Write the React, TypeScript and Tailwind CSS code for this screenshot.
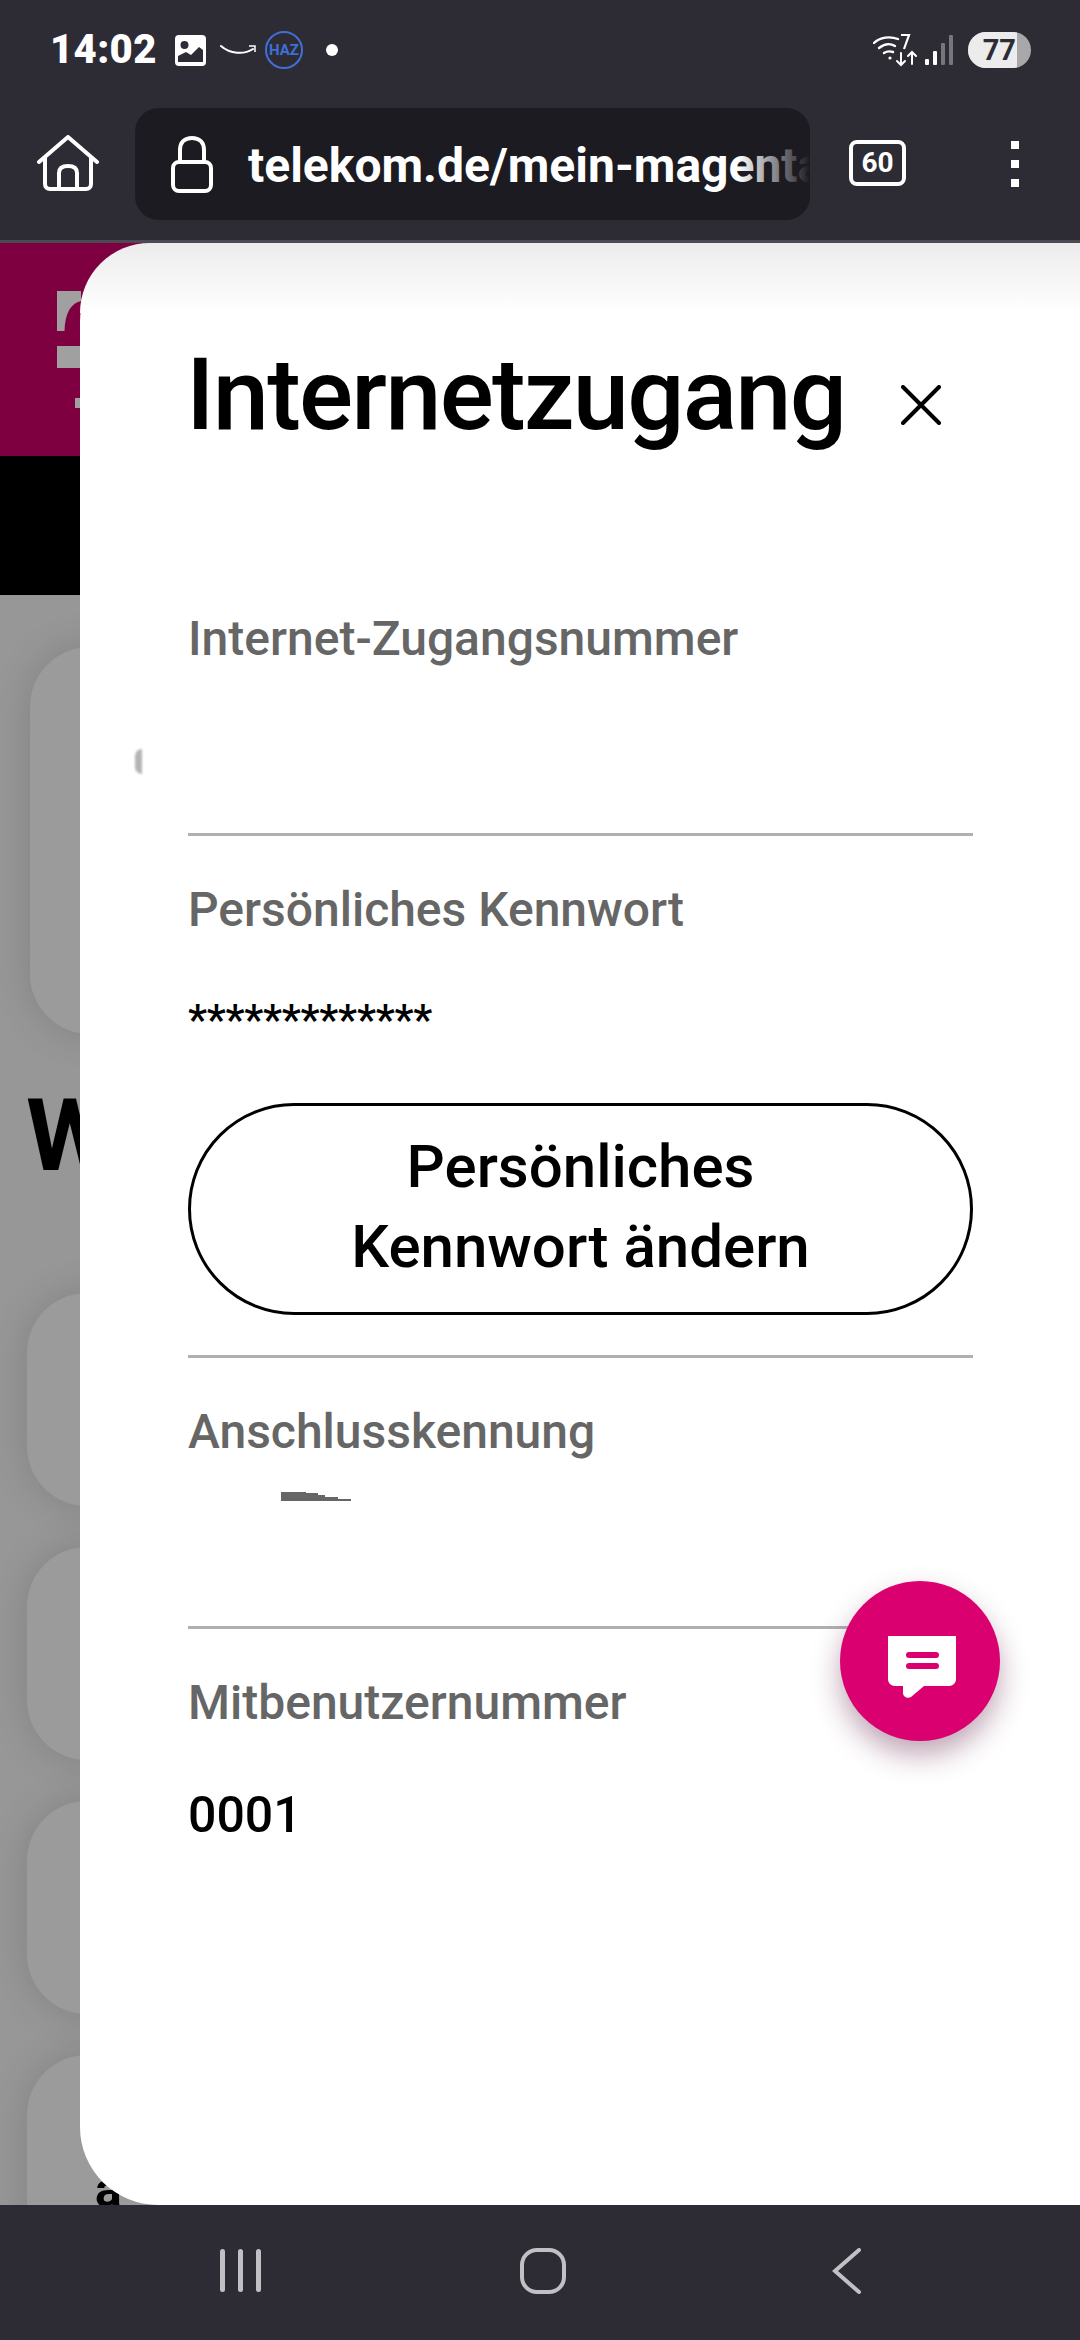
import React from "react";

const font = { fontFamily: "Roboto, 'Liberation Sans', sans-serif" };

function StatusBar() {
  return (
    <div className="flex h-[108px] items-center pl-[50px] pb-[8px]">
      <span className="w-[105px] whitespace-nowrap text-[40px] font-black leading-none tracking-[0.4px] text-white">14:02</span>
      <svg className="ml-[20px]" width="31" height="31" viewBox="0 0 31 31">
        <rect width="31" height="31" rx="4" fill="#fff" />
        <circle cx="9.5" cy="10" r="4" fill="#2d2c35" />
        <path d="M3 26V21L11 17L16 20L24 12L28 15V26Z" fill="#2d2c35" />
        <path d="M3 24V27H28V24Z" fill="#2d2c35" />
      </svg>
      <svg className="ml-[14px]" width="36" height="14" viewBox="0 0 36 14" fill="none">
        <path d="M1 3C10 11 24 12 33 6" stroke="#fff" strokeWidth="2" strokeLinecap="round" />
        <path d="M29 3H35V9" stroke="#fff" strokeWidth="1.5" />
      </svg>
      <div className="ml-[9px] flex h-[38px] w-[38px] items-center justify-center rounded-full border-2 border-[#3f6fd8] text-[15px] font-bold text-[#3f6fd8]">
        HAZ
      </div>
      <div className="ml-[23px] h-[12px] w-[12px] rounded-full bg-white" />
      <div className="ml-auto flex items-center pr-[49px]">
        <svg width="44" height="34" viewBox="0 0 44 34" fill="none" stroke="#fff" strokeLinecap="round">
          <path d="M1 10C7 4 17 3 25 6" strokeWidth="2.4" />
          <path d="M6 15C11 11 17 10 22 13" strokeWidth="2.4" />
          <path d="M11 20C14 18 17 18 20 19" strokeWidth="2.4" />
          <circle cx="17" cy="25" r="1.6" fill="#fff" stroke="none" />
          <path d="M28 2H36L31 16" strokeWidth="2.2" strokeLinecap="butt" />
          <path d="M28 20V32M24 28L28 32L32 28" strokeWidth="2" />
          <path d="M39 31V19M35 23L39 19L43 23" strokeWidth="2" />
        </svg>
        <svg className="ml-[8px]" width="28" height="30" viewBox="0 0 28 30">
          <rect x="0" y="24" width="4" height="6" rx="1" fill="#fff" />
          <rect x="8" y="16" width="4" height="14" rx="1" fill="#fff" />
          <rect x="16" y="8" width="4" height="22" rx="1" fill="#77767c" />
          <rect x="24" y="0" width="4" height="30" rx="1" fill="#77767c" />
        </svg>
        <div className="ml-[15px] flex h-[36px] w-[63px] overflow-hidden rounded-full bg-[#a8a8aa]">
          <div className="flex h-full w-[49px] items-center justify-end bg-[#ececec] pr-[1px] text-[29px] font-bold leading-none text-[#2d2c35]">
            77
          </div>
        </div>
      </div>
    </div>
  );
}

function BrowserBar() {
  return (
    <div className="flex h-[135px] items-start border-b-[3px] border-[#4b4a52]">
      <svg className="ml-[37px] mt-[27px]" width="62" height="56" viewBox="0 0 62 56" fill="none" stroke="#fff" strokeWidth="4" strokeLinejoin="round" strokeLinecap="round">
        <path d="M2 27L31 2L60 27" />
        <path d="M8 23V49C8 52 10 54 13 54H49C52 54 54 52 54 49V23" />
        <path d="M22 54V38C22 33 25 31 31 31C37 31 40 33 40 38V54" />
      </svg>
      <div className="relative ml-[36px] flex h-[112px] w-[675px] items-center overflow-hidden rounded-[24px] bg-[#1c1b21]">
        <svg className="ml-[36px] shrink-0" width="42" height="57" viewBox="0 0 42 57" fill="none" stroke="#fff" strokeWidth="4">
          <rect x="2" y="26" width="38" height="29" rx="6" />
          <path d="M9 26V14C9 6 14 2 21 2C28 2 33 6 33 14V26" />
        </svg>
        <span className="ml-[35px] mt-[4px] whitespace-nowrap text-[48px] font-bold leading-none text-white">
          telekom.de/mein-magenta
        </span>
        <div className="absolute inset-y-0 right-0 w-[72px] bg-gradient-to-r from-transparent to-[#1c1b21]" />
      </div>
      <div className="ml-[39px] mt-[32px] flex h-[46px] w-[57px] items-center justify-center rounded-[8px] border-[4px] border-white text-[28px] font-bold leading-none text-white">
        60
      </div>
      <div className="ml-[105px] mt-[33px] flex flex-col gap-[11px]">
        <div className="h-[8px] w-[8px] bg-white" />
        <div className="h-[8px] w-[8px] bg-white" />
        <div className="h-[8px] w-[8px] bg-white" />
      </div>
    </div>
  );
}

function PageBehind() {
  return (
    <div className="flex h-full flex-col overflow-hidden">
      <div className="h-[213px] shrink-0 bg-[#7f0040] pl-[57px] pt-[48px]">
        <svg width="24" height="117" viewBox="0 0 24 117" fill="#a0a0a0">
          <path d="M0 0H24V10C14 12 8 22 7.500 40H0Z" />
          <rect x="0" y="55" width="24" height="22" />
          <rect x="18" y="107" width="6" height="10" />
        </svg>
      </div>
      <div className="h-[139px] shrink-0 bg-black" />
      <div className="flex-1 bg-[#979797]">
        <div className="ml-[30px] mt-[52px] h-[387px] rounded-[60px] bg-[#9b9b9b] shadow-[0_0_40px_rgba(0,0,0,0.14)]" />
        <div className="ml-[26px] mt-[52px] h-[100px] text-[100px] font-bold leading-[100px] text-black">W</div>
        <div className="ml-[27px] mt-[107px] flex flex-col gap-[41px]">
          <div className="h-[213px] rounded-[60px] bg-[#9b9b9b] shadow-[0_0_40px_rgba(0,0,0,0.14)]" />
          <div className="h-[213px] rounded-[60px] bg-[#9b9b9b] shadow-[0_0_40px_rgba(0,0,0,0.14)]" />
          <div className="h-[213px] rounded-[60px] bg-[#9b9b9b] shadow-[0_0_40px_rgba(0,0,0,0.14)]" />
          <div className="h-[213px] rounded-[60px] bg-[#9b9b9b] pl-[68px] pt-[110px] text-[50px] font-bold leading-none text-black shadow-[0_0_40px_rgba(0,0,0,0.14)]">
            ä
          </div>
        </div>
      </div>
    </div>
  );
}

function Label({ children }: { children: React.ReactNode }) {
  return <div className="text-[48px] font-medium leading-[54px] text-[#666666]">{children}</div>;
}

function Sheet() {
  return (
    <div className="absolute inset-y-0 left-[80px] right-0 rounded-l-[78px] bg-white">
      <div className="absolute inset-x-0 top-0 h-[70px] rounded-tl-[78px] bg-gradient-to-b from-[#ececec] to-white" />
      <div className="relative pl-[108px] pr-[107px]">
        <div className="flex items-start pt-[92px]">
          <h1 className="-ml-[2px] text-[101px] font-medium leading-[120px] tracking-[-1.8px] text-black">Internetzugang</h1>
          <svg className="ml-[56px] mt-[50px]" width="40" height="40" viewBox="0 0 40 40" fill="none" stroke="#000" strokeWidth="4" strokeLinecap="round">
            <path d="M2 2L38 38M38 2L2 38" />
          </svg>
        </div>
        <div className="mt-[157px] h-[224px] border-b-[3px] border-[#b0b0b0]">
          <Label>Internet-Zugangsnummer</Label>
          <div className="-ml-[53px] mt-[83px] h-[25px] w-[7px] rounded-l-full bg-[#b5b5b5] blur-[1px]" />
        </div>
        <div className="h-[522px] border-b-[3px] border-[#b0b0b0] pt-[47px]">
          <Label>Persönliches Kennwort</Label>
          <div className="mt-[60px] text-[43px] font-medium leading-[44px] tracking-[-0.3px] text-black">*************</div>
          <div className="mt-[62px] flex h-[212px] w-full items-center justify-center rounded-full border-[3px] border-black pb-[5px] text-center text-[60px] font-medium leading-[80px] text-black">
            Persönliches
            <br />
            Kennwort ändern
          </div>
        </div>
        <div className="h-[271px] border-b-[3px] border-[#b0b0b0] pt-[47px]">
          <Label>Anschlusskennung</Label>
          <svg className="ml-[93px] mt-[33px] blur-[0.5px]" width="70" height="10" viewBox="0 0 70 10" fill="#666">
            <path d="M0 0H25V1H37V3H44V5H57V7H70V9H0Z" />
          </svg>
        </div>
        <div className="pt-[47px]">
          <Label>Mitbenutzernummer</Label>
          <div className="mt-[55px] text-[50px] font-medium leading-[60px] text-black">0001</div>
        </div>
      </div>
      <div className="absolute left-[760px] top-[1338px] flex h-[160px] w-[160px] items-center justify-center rounded-full bg-[#db0070] shadow-[0_14px_28px_rgba(90,20,60,0.38)]">
        <svg className="ml-[4px] mt-[12px]" width="68" height="62" viewBox="0 0 68 62">
          <path d="M0 0H68V43C68 47 65 50 61 50H36L23 61C20 63 15 61 15 57V50H7C3 50 0 47 0 43Z" fill="#fff" />
          <rect x="18" y="16" width="33" height="6" rx="3" fill="#db0070" />
          <rect x="18" y="27" width="33" height="6" rx="3" fill="#db0070" />
        </svg>
      </div>
    </div>
  );
}

function NavBar() {
  return (
    <div className="flex h-[135px] shrink-0 items-center bg-[#2d2c35]">
      <div className="mb-[4px] ml-[220px] flex h-[43px] gap-[13px]">
        <div className="w-[5px] rounded-full bg-[#c0c0c5]" />
        <div className="w-[5px] rounded-full bg-[#c0c0c5]" />
        <div className="w-[5px] rounded-full bg-[#c0c0c5]" />
      </div>
      <div className="mb-[3px] ml-[259px] h-[46px] w-[46px] rounded-[17px] border-[4px] border-[#c0c0c5]" />
      <svg className="mb-[3px] ml-[266px]" width="30" height="46" viewBox="0 0 30 46" fill="none" stroke="#c0c0c5" strokeWidth="4" strokeLinecap="round">
        <path d="M27 2L3 23L27 44" />
      </svg>
    </div>
  );
}

export default function App() {
  return (
    <div className="flex h-[2340px] w-[1080px] flex-col overflow-hidden bg-[#2d2c35]" style={font}>
      <div className="shrink-0 bg-[#2d2c35]">
        <StatusBar />
        <BrowserBar />
      </div>
      <div className="relative min-h-0 flex-1 overflow-hidden">
        <PageBehind />
        <Sheet />
      </div>
      <NavBar />
    </div>
  );
}
